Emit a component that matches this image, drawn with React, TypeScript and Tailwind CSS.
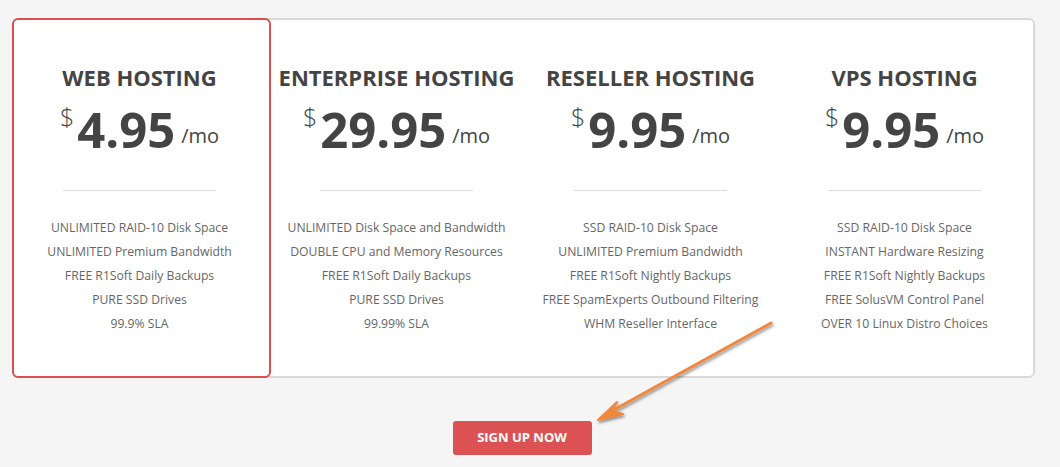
import React from "react";

const plans = [
  {
    title: "Web Hosting",
    price: "4.95",
    features: [
      "UNLIMITED RAID-10 Disk Space",
      "UNLIMITED Premium Bandwidth",
      "FREE R1Soft Daily Backups",
      "PURE SSD Drives",
      "99.9% SLA",
    ],
    active: true,
  },
  {
    title: "Enterprise Hosting",
    price: "29.95",
    features: [
      "UNLIMITED Disk Space and Bandwidth",
      "DOUBLE CPU and Memory Resources",
      "FREE R1Soft Daily Backups",
      "PURE SSD Drives",
      "99.99% SLA",
    ],
  },
  {
    title: "Reseller Hosting",
    price: "9.95",
    features: [
      "SSD RAID-10 Disk Space",
      "UNLIMITED Premium Bandwidth",
      "FREE R1Soft Nightly Backups",
      "FREE SpamExperts Outbound Filtering",
      "WHM Reseller Interface",
    ],
  },
  {
    title: "VPS Hosting",
    price: "9.95",
    features: [
      "SSD RAID-10 Disk Space",
      "INSTANT Hardware Resizing",
      "FREE R1Soft Nightly Backups",
      "FREE SolusVM Control Panel",
      "OVER 10 Linux Distro Choices",
    ],
  },
];

const PlanColumn = ({ plan }: any) => {
  return (
    <div
      className={
        plan.active
          ? "flex-1 flex flex-col items-center -my-[2px] -ml-[3px] border-2 border-[#da4f4f] rounded-md bg-white pt-[42px] pr-[4px]"
          : "flex-1 flex flex-col items-center pt-[42px] pr-[3px]"
      }
    >
      <h2 className="text-[22px] leading-[30px] font-bold uppercase text-[#444]">{plan.title}</h2>
      <div className="flex items-start mt-[8px] text-[#444]">
        <span className="text-[25px] leading-none font-light mt-[4px] mr-[3px]">$</span>
        <span className="text-[49px] leading-[58px] font-bold">{plan.price}</span>
        <span className="text-[20px] font-normal self-end mb-[7px] ml-[6px]">/mo</span>
      </div>
      <div className="w-[153px] h-px bg-[#dcdcdc] mt-[32px]"></div>
      <ul className="mt-[25px] text-[12.2px] leading-[24px] text-[#666] text-center">
        {plan.features.map((f: string, i: number) => (
          <li key={i}>{f}</li>
        ))}
      </ul>
    </div>
  );
};

export default function App() {
  return (
    <div className="relative w-[1060px] h-[467px] bg-[#f5f5f5] overflow-hidden" style={{ fontFamily: '"Open Sans", sans-serif' }}>
      <div className="pt-[18px] pl-[13px] w-[1035px]">
        <div className="flex h-[360px] bg-white border-2 border-[#d9d9d9] rounded-md">
          {plans.map((p, i) => (
            <PlanColumn key={i} plan={p} />
          ))}
        </div>
      </div>
      <div className="flex justify-center pt-[43px]">
        <button className="w-[139px] h-[34px] ml-[-16px] bg-[#dc5254] rounded-[3px] text-white text-[13px] font-bold uppercase">
          Sign up now
        </button>
      </div>
      <svg className="absolute left-0 top-0 pointer-events-none" width="1060" height="467">
        <defs>
          <filter id="sh" x="-20%" y="-20%" width="140%" height="140%">
            <feDropShadow dx="1" dy="2" stdDeviation="1.5" floodColor="#000" floodOpacity="0.45" />
          </filter>
        </defs>
        <g filter="url(#sh)">
          <line x1="771" y1="323" x2="610" y2="412" stroke="#f0873c" strokeWidth="3" strokeLinecap="round" />
          <path d="M598 420 L617 402 L612 411 L623 414 Z" fill="#f0873c" stroke="#f0873c" strokeWidth="2" strokeLinejoin="round" />
        </g>
      </svg>
    </div>
  );
}
